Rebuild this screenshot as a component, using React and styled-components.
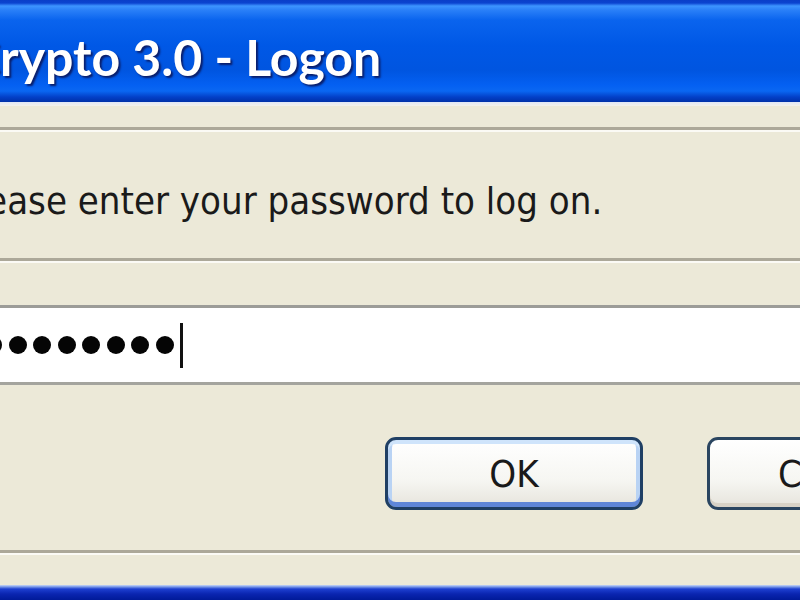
import React from "react";
import styled, { createGlobalStyle } from "styled-components";

const GlobalStyle = createGlobalStyle`
  html, body {
    margin: 0;
    padding: 0;
    background: #ece9d8;
    overflow: hidden;
  }
`;

const Window = styled.div`
  width: 800px;
  height: 600px;
  display: flex;
  flex-direction: column;
  overflow: hidden;
  background: #ece9d8;
  font-family: "DejaVu Sans Condensed", "DejaVu Sans", sans-serif;
`;

const TitleBar = styled.div`
  height: 102px;
  flex-shrink: 0;
  display: flex;
  align-items: center;
  background: linear-gradient(
    180deg,
    #0a3fc8 0px,
    #0b44d0 3px,
    #3d95ff 6px,
    #2a80f8 10px,
    #0a64ee 20px,
    #0058e6 45px,
    #0055e0 70px,
    #0460f2 85px,
    #0a67f2 91px,
    #0340c8 97px,
    #0030a8 102px
  );
`;

const Title = styled.span`
  margin-left: -33px;
  padding-top: 12px;
  font-family: Lato, "DejaVu Sans", sans-serif;
  font-weight: 700;
  font-size: 50px;
  color: #ffffff;
  white-space: nowrap;
  text-shadow: 2px 2px 2px #0a1e6a;
`;

const Highlight = styled.div`
  height: 4px;
  flex-shrink: 0;
  background: linear-gradient(180deg, #dfe6f6, #f4f2ea);
`;

const Groove = styled.div`
  height: 3px;
  flex-shrink: 0;
  margin-top: ${(p) => p.top}px;
  background: #aca899;
  border-bottom: 2px solid #fbfaf5;
`;

const Prompt = styled.p`
  margin: ${(p) => p.top}px 0 0 -44px;
  font-size: 38px;
  line-height: 44px;
  color: #1a1a1a;
  white-space: nowrap;
`;

const PasswordField = styled.div`
  margin-top: ${(p) => p.top}px;
  height: 74px;
  flex-shrink: 0;
  display: flex;
  align-items: center;
  gap: 6.5px;
  margin-left: -16px;
  background: #ffffff;
  border-top: 3px solid #9c9c98;
  border-bottom: 3px solid #a4a49e;
`;

const Dot = styled.span`
  width: 18px;
  height: 18px;
  flex-shrink: 0;
  border-radius: 50%;
  background: #050505;
`;

const Caret = styled.span`
  width: 3px;
  height: 45px;
  margin-left: 0;
  flex-shrink: 0;
  background: #111111;
`;

const ButtonRow = styled.div`
  margin-top: ${(p) => p.top}px;
  display: flex;
  gap: 64px;
  padding-left: 385px;
  flex-shrink: 0;
`;

const Button = styled.button`
  width: 258px;
  height: 73px;
  flex-shrink: 0;
  box-sizing: border-box;
  border: 3px solid ${(p) => (p.$default ? "#1f3f64" : "#2a4560")};
  border-radius: 11px;
  background: linear-gradient(180deg, #ffffff 0%, #f6f6f2 60%, #e6e4dc 100%);
  font-family: "DejaVu Sans Condensed", "DejaVu Sans", sans-serif;
  font-size: 38px;
  color: #1a1a1a;
  padding: 0;
  box-shadow: ${(p) =>
    p.$default
      ? "inset 0 4px 0 #cfe4fb, inset 0 -5px 0 #5f86d8, inset 4px 0 0 #b9d3f4, inset -4px 0 0 #b9d3f4"
      : "inset 0 -4px 0 #d8d2c6, inset -3px 0 0 #e2ded4"};
`;

const Footer = styled.div`
  margin-top: auto;
  height: 15px;
  flex-shrink: 0;
  background: linear-gradient(180deg, #c9d8f6 0px, #6f8fe6 2px, #1d3fd0 4px, #0a25b0 9px, #001a98 15px);
`;

export default function App() {
  return (
    <>
      <GlobalStyle />
      <Window>
        <TitleBar>
          <Title>Crypto 3.0 - Logon</Title>
        </TitleBar>
        <Highlight />
        <Groove top={21} />
        <Prompt top={47}>Please enter your password to log on.</Prompt>
        <Groove top={35} />
        <PasswordField top={42}>
          {Array.from({ length: 8 }).map((_, i) => (
            <Dot key={i} />
          ))}
          <Caret />
        </PasswordField>
        <ButtonRow top={52}>
          <Button $default>OK</Button>
          <Button>Cancel</Button>
        </ButtonRow>
        <Groove top={40} />
        <Footer />
      </Window>
    </>
  );
}
